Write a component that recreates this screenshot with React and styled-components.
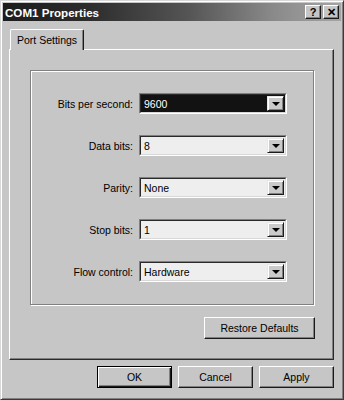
import React from "react";
import styled, { createGlobalStyle } from "styled-components";

const Global = createGlobalStyle`
  html, body { margin: 0; padding: 0; background: #c6c6c6; }
  body { font-family: "Liberation Sans", Arial, sans-serif; font-size: 10.5px; color: #000; }
  * { box-sizing: border-box; }
`;

const Window = styled.div`
  width: 344px;
  height: 400px;
  background: #c6c6c6;
  border: 1px solid;
  border-color: #d8d8d8 #3a3a3a #3a3a3a #d8d8d8;
  box-shadow: inset 1px 1px #ffffff, inset -1px -1px #808080;
  padding: 2px;
  display: flex;
  flex-direction: column;
`;

const TitleBar = styled.div`
  height: 18px;
  display: flex;
  align-items: center;
  padding: 0 2px 0 2px;
  background: linear-gradient(to right, #1c1c1c 0%, #2c2c2c 25%, #555 55%, #8a8a8a 80%, #a4a4a4 100%);
`;

const Title = styled.div`
  flex: 1;
  color: #fff;
  font-weight: bold;
  font-size: 11.6px;
`;

const CaptionButton = styled.div`
  width: 16px;
  height: 14px;
  margin-left: 2px;
  background: #c6c6c6;
  border: 1px solid;
  border-color: #fff #1a1a1a #1a1a1a #fff;
  box-shadow: inset -1px -1px #808080;
  display: flex;
  align-items: center;
  justify-content: center;
  font-weight: bold;
  font-size: 11px;
  line-height: 1;
  color: #000;
`;

const Body = styled.div`
  flex: 1;
  display: flex;
  flex-direction: column;
  padding: 8px 7px 0 6px;
`;

const TabStrip = styled.div`
  display: flex;
  padding-left: 1px;
  position: relative;
  z-index: 1;
`;

const Tab = styled.div`
  width: 74px;
  height: 21px;
  margin-bottom: -1px;
  background: #c6c6c6;
  border-top: 1px solid #fff;
  border-left: 1px solid #fff;
  border-right: 1px solid #1a1a1a;
  box-shadow: inset -1px 0 #808080;
  border-radius: 2px 2px 0 0;
  padding: 4px 0 0 6px;
`;

const Panel = styled.div`
  background: #c6c6c6;
  border: 1px solid;
  border-color: #fff #2a2a2a #2a2a2a #fff;
  box-shadow: inset -1px -1px #808080;
  padding: 20px 19px 20px 20px;
  display: flex;
  flex-direction: column;
`;

const Group = styled.div`
  border: 1px solid #808080;
  box-shadow: inset 1px 1px #fff, 1px 1px #fff;
  padding: 22px 0 22px 0;
  display: grid;
  grid-template-columns: 102px 148px;
  column-gap: 6px;
  row-gap: 21px;
  grid-auto-rows: 21px;
`;

const Label = styled.div`
  display: flex;
  align-items: center;
  justify-content: flex-end;
`;

const Combo = styled.div`
  display: flex;
  align-items: stretch;
  border: 1px solid;
  border-color: #808080 #fff #fff #808080;
`;

const ComboInner = styled.div`
  flex: 1;
  display: flex;
  border: 1px solid;
  border-color: #2a2a2a #d8d8d8 #d8d8d8 #2a2a2a;
  background: ${(p) => (p.$active ? "#121212" : "#eeeeee")};
  padding: 1px;
`;

const ComboText = styled.div`
  flex: 1;
  display: flex;
  align-items: center;
  padding-left: 2px;
  color: ${(p) => (p.$active ? "#fff" : "#000")};
`;

const DropButton = styled.div`
  width: 17px;
  background: #cacaca;
  border: 1px solid;
  border-color: #e8e8e8 #1a1a1a #1a1a1a #e8e8e8;
  box-shadow: inset 1px 1px #fff, inset -1px -1px #808080;
  display: flex;
  align-items: center;
  justify-content: center;
`;

const Arrow = styled.div`
  width: 0;
  height: 0;
  border-left: 4px solid transparent;
  border-right: 4px solid transparent;
  border-top: 4px solid #000;
  margin-top: 1px;
`;

const Button = styled.div`
  width: ${(p) => p.$w || 75}px;
  height: 22px;
  background: #c6c6c6;
  border: 1px solid;
  border-color: #fff #1a1a1a #1a1a1a #fff;
  box-shadow: inset -1px -1px #808080;
  display: flex;
  align-items: center;
  justify-content: center;
  font-size: 10.5px;
  color: #000;
  ${(p) =>
    p.$default &&
    `
    border: 1px solid #000;
    box-shadow: inset 1px 1px #fff, inset -1px -1px #1a1a1a, inset -2px -2px #808080;
  `}
`;

const RestoreRow = styled.div`
  display: flex;
  justify-content: flex-end;
  margin-top: 12px;
  margin-right: -1px;
`;

const ButtonRow = styled.div`
  display: flex;
  justify-content: flex-end;
  gap: 6px;
  margin-top: 6px;
`;

const fields = [
  { label: "Bits per second:", value: "9600", active: true },
  { label: "Data bits:", value: "8" },
  { label: "Parity:", value: "None" },
  { label: "Stop bits:", value: "1" },
  { label: "Flow control:", value: "Hardware" },
];

export default function App() {
  return (
    <>
      <Global />
      <Window>
        <TitleBar>
          <Title>COM1 Properties</Title>
          <CaptionButton>?</CaptionButton>
          <CaptionButton>✕</CaptionButton>
        </TitleBar>
        <Body>
          <TabStrip>
            <Tab>Port Settings</Tab>
          </TabStrip>
          <Panel>
            <Group>
              {fields.map((f) => (
                <React.Fragment key={f.label}>
                  <Label>{f.label}</Label>
                  <Combo>
                    <ComboInner $active={f.active}>
                      <ComboText $active={f.active}>{f.value}</ComboText>
                      <DropButton>
                        <Arrow />
                      </DropButton>
                    </ComboInner>
                  </Combo>
                </React.Fragment>
              ))}
            </Group>
            <RestoreRow>
              <Button $w={111}>Restore Defaults</Button>
            </RestoreRow>
          </Panel>
          <ButtonRow>
            <Button $default>OK</Button>
            <Button>Cancel</Button>
            <Button>Apply</Button>
          </ButtonRow>
        </Body>
      </Window>
    </>
  );
}
